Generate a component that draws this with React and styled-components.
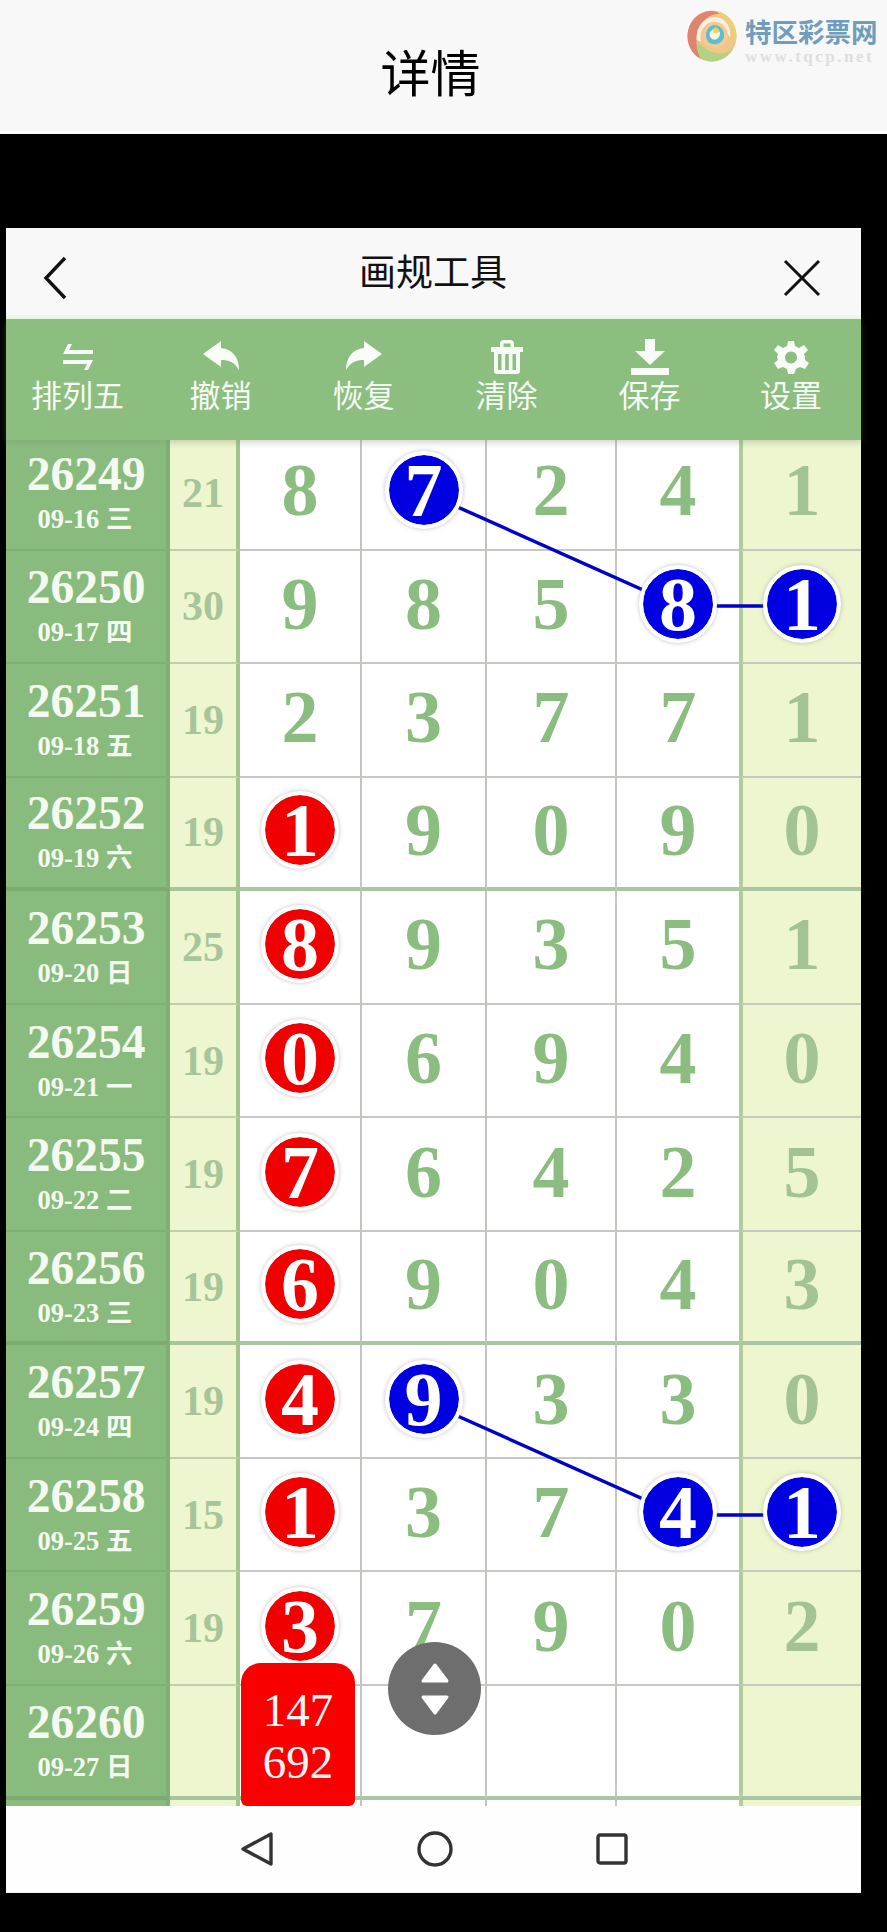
import React from 'react';
import styled, { createGlobalStyle } from 'styled-components';

const GlobalStyle = createGlobalStyle`
    html, body {
        margin: 0;
        padding: 0;
        background: #000;
    }
    * {
        box-sizing: border-box;
    }
`;

const Page = styled.div`
    width: 887px;
    height: 1932px;
    background: #000;
    overflow: hidden;
    font-family: "Noto Sans CJK SC", "Noto Sans", sans-serif;
`;

const TopBar = styled.header`
    height: 134px;
    background: #f8f8f8;
    border-bottom: 3px solid #fdfdfd;
    position: relative;
    display: flex;
    align-items: center;
    justify-content: center;
`;

const TopTitle = styled.h1`
    margin: 8px 26px 0 0;
    font-size: 50px;
    font-weight: 400;
    line-height: 1;
    color: #000;
`;

const Logo = styled.div`
    position: absolute;
    top: 9px;
    left: 686px;
    display: flex;
    gap: 7px;
`;

const LogoText = styled.div`
    display: flex;
    flex-direction: column;
    padding-top: 4px;
`;

const LogoName = styled.span`
    font-size: 26.5px;
    line-height: 36px;
    font-weight: 700;
    white-space: nowrap;
    color: #709dbd;
`;

const LogoUrl = styled.span`
    font-family: "Liberation Serif", serif;
    font-size: 17px;
    line-height: 16px;
    font-weight: 700;
    letter-spacing: 2.5px;
    color: #dedede;
    white-space: nowrap;
`;

const Panel = styled.main`
    margin: 94px 0 0 6px;
    width: 855px;
    height: 1664px;
    display: flex;
    flex-direction: column;
`;

const Heading = styled.div`
    height: 91px;
    flex: none;
    background: #f8f8f8;
    border-bottom: 4px solid #eff7e9;
    display: flex;
    align-items: center;
    justify-content: space-between;
    padding: 12px 40px 0 37px;
`;

const HeadingTitle = styled.h2`
    margin: 0 0 14px 16px;
    font-size: 37px;
    font-weight: 400;
    line-height: 1;
    color: #111;
`;

const Toolbar = styled.nav`
    height: 121px;
    flex: none;
    position: relative;
    z-index: 5;
    background: #8cbe80;
    box-shadow: 0 3px 6px rgba(120, 150, 110, 0.35);
    display: grid;
    grid-template-columns: repeat(5, 143px) 1fr;
    padding-top: 20px;
`;

const Tool = styled.div`
    display: flex;
    flex-direction: column;
    align-items: center;
    color: #f6fbf3;
`;

const ToolIcon = styled.svg`
    width: 40px;
    height: 36px;
    fill: #f8fcf6;
`;

const ToolLabel = styled.span`
    font-size: 31px;
    line-height: 34px;
    margin-top: 2px;
`;

const Table = styled.section`
    position: relative;
    flex: none;
    height: 1369px;
    margin-top: -3px;
    overflow: hidden;
`;

const Row = styled.div`
    display: grid;
    grid-template-columns: 164px 70px 122px 125px 130px 122px 122px;
    height: 113.55px;
`;

const DateCell = styled.div`
    background: #8abb7e;
    border-right: 4px solid #7fb074;
    border-bottom: ${(p) => (p.$thick ? '4px solid #7cab72' : '2px solid #7fb074')};
    display: flex;
    flex-direction: column;
    align-items: center;
    justify-content: center;
    color: #f4faf0;
    padding-bottom: 1px;
`;

const Issue = styled.div`
    font-family: "Liberation Serif", serif;
    font-size: 47.5px;
    font-weight: 700;
    line-height: 50px;
`;

const Day = styled.div`
    font-family: "Liberation Serif", "Noto Sans CJK SC", serif;
    font-size: 26.5px;
    font-weight: 700;
    line-height: 34px;
    margin: 3px 2px 0 0;
`;

const SumCell = styled.div`
    background: #eef6cf;
    border-right: 4px solid #a3c390;
    border-bottom: ${(p) => (p.$thick ? '4px solid #aac59a' : '2px solid #c0cfa8')};
    display: flex;
    align-items: center;
    justify-content: center;
    font-family: "Liberation Serif", serif;
    font-size: 42px;
    font-weight: 700;
    color: #a8c49a;
`;

const Cell = styled.div`
    background: ${(p) => (p.$last ? '#eef6cf' : '#fff')};
    border-right: ${(p) => (p.$last || p.$edge ? 'none' : '2px solid #c3c6bf')};
    border-left: ${(p) => (p.$last ? '4px solid #b2cc9c' : 'none')};
    border-bottom: ${(p) => (p.$thick ? '4px solid #aac5a2' : '2px solid #c6c9c2')};
    padding-bottom: 5px;
    display: flex;
    align-items: center;
    justify-content: center;
    font-family: "Liberation Serif", serif;
    font-size: 74px;
    font-weight: 700;
    line-height: 1;
    color: ${(p) => (p.$last ? '#a3c394' : '#8cbd80')};
`;

const Ball = styled.div`
    position: relative;
    z-index: 2;
    width: 78px;
    height: 78px;
    flex: none;
    border-radius: 50%;
    border: 4px solid #fff;
    box-shadow: 0 0 4px rgba(130, 130, 130, 0.5);
    background: ${(p) => (p.$red ? '#f00000' : '#0000e0')};
    background-clip: padding-box;
    color: #fff;
    font-size: 76px;
    display: flex;
    align-items: center;
    justify-content: center;
`;

const Links = styled.svg`
    position: absolute;
    top: 0;
    left: 0;
    z-index: 1;
    pointer-events: none;
`;

const CountTag = styled.div`
    position: absolute;
    z-index: 3;
    left: 235px;
    top: 1226px;
    width: 114px;
    height: 143px;
    background: #f80000;
    border-radius: 20px 20px 6px 6px;
    padding-top: 21px;
    color: #f8f4f4;
    font-family: "Liberation Serif", serif;
    font-size: 47px;
    line-height: 52px;
    text-align: center;
`;

const ScrollButton = styled.div`
    position: absolute;
    z-index: 4;
    left: 382px;
    top: 1205px;
    width: 93px;
    height: 93px;
    border-radius: 50%;
    background: #6e6e6e;
    display: flex;
    align-items: center;
    justify-content: center;
`;

const NavBar = styled.footer`
    flex: none;
    height: 87px;
    background: #fefefe;
    border-bottom: 1px solid #f2f2f2;
    position: relative;
    z-index: 6;
    display: flex;
    align-items: center;
    justify-content: center;
    gap: 143px;
`;

const Back = () => (
    <svg width="24" height="44" viewBox="0 0 24 44" fill="none" stroke="#111" strokeWidth="3.4">
        <path d="M22 2 L3 22 L22 42" />
    </svg>
);

const Close = () => (
    <svg width="38" height="38" viewBox="0 0 38 38" fill="none" stroke="#111" strokeWidth="3">
        <path d="M2 2 L36 36 M36 2 L2 36" />
    </svg>
);

const SwapIcon = () => (
    <ToolIcon viewBox="0 0 40 36">
        <path d="M10 5 h4 l-3 6 H35 v4 H5 Z" />
        <path d="M5 21 H35 l-5 10 h-4 l3 -6 H5 Z" />
    </ToolIcon>
);

const UndoIcon = () => (
    <ToolIcon viewBox="0 0 40 36">
        <path d="M2 15 L20 2 V9 C32 10 38 19 38 31 C33 23 28 21 20 21 V28 Z" />
    </ToolIcon>
);

const RedoIcon = () => (
    <ToolIcon viewBox="0 0 40 36">
        <path d="M38 15 L20 2 V9 C8 10 2 19 2 31 C7 23 12 21 20 21 V28 Z" />
    </ToolIcon>
);

const TrashIcon = () => (
    <ToolIcon viewBox="0 0 40 36">
        <path fillRule="evenodd" d="M13 8 V5 q0 -4 4 -4 H23 q4 0 4 4 V8 Z M16.5 8 H23.5 V4.5 H16.5 Z" />
        <path d="M4 8 H36 V13 H4 Z" />
        <path fillRule="evenodd" d="M7 13 H33 V32 q0 3 -3 3 H10 q-3 0 -3 -3 Z M11 15 v16 h3.5 V15 Z M18.2 15 v16 h3.6 V15 Z M25.5 15 v16 h3.5 V15 Z" />
    </ToolIcon>
);

const SaveIcon = () => (
    <ToolIcon viewBox="0 0 40 36">
        <path d="M15 0 H25 V12 H35 L20 26 L5 12 H15 Z" />
        <path d="M1 29 H39 V36 H1 Z" />
    </ToolIcon>
);

const GearIcon = () => (
    <ToolIcon viewBox="0 0 40 36">
        <path
            fillRule="evenodd"
            d="M17 2 H23 L24 7 L28 9 L33 6 L37 11 L33 15 L34 18 L34 21 L38 24 L34 30 L29 28 L25 30 L23 35 H17 L16 30 L12 28 L7 30 L3 24 L7 21 L6 18 L7 15 L3 11 L7 6 L12 9 L16 7 Z M20 12.5 a6 6 0 1 0 0.01 0 Z"
        />
    </ToolIcon>
);

const LogoMark = () => (
    <svg width="52" height="54" viewBox="0 0 52 54" fill="none">
        <ellipse cx="26" cy="27" rx="24.5" ry="25.5" fill="#efc788" />
        <path d="M24 2 C10 3 1.500 15 1.500 28 C1.500 38 8 47 15 50 C10 41 8 26 15 15 C20 8 28 4 36 5 C32 3 28 1.500 24 2 Z" fill="#dd8570" />
        <path d="M30 2 C42 4 50.500 14 50.500 27 C50.500 31 49.500 35 48 38 C49 26 43 12 30 2 Z" fill="#eccf74" />
        <path d="M15 50 C25 55 41 53 48 38 C42 45 32 46 24 42 C19 40 14 36 11 31 C11 38 12 45 15 50 Z" fill="#b4d285" />
        <path d="M11 31 C9 20 17 8 30 8 C40 9 46 19 44 29 C41 22 36 14 28 13 C19 13 13 22 15 33 Z" fill="#f7efdf" />
        <path d="M18 33 C24 42 37 40 41 31 C44 22 38 13 29 13 C21 13 15 23 18 33 Z" fill="#f5c99a" />
        <path d="M21 31 C25 38 36 36 38 28 C39 21 34 16 28 16 C22 17 18 23 21 31 Z" fill="#5dbfc9" />
        <path d="M25 29 C29 33 34 29 34 24 C33 20 29 19 26 21 C23 23 23 27 25 29 Z" fill="#f3f6ea" />
        <path d="M28 24 C30 25 33 24 33 21 C32 19 30 18 28 19 C27 21 27 23 28 24 Z" fill="#efd060" />
    </svg>
);

const UpDown = () => (
    <svg width="30" height="56" viewBox="0 0 30 56" fill="#fff" stroke="#fff" strokeWidth="3" strokeLinejoin="round">
        <path d="M15 4 L27 20 H3 Z" />
        <path d="M3 36 H27 L15 52 Z" />
    </svg>
);

const tools = [
    { label: '排列五', icon: <SwapIcon /> },
    { label: '撤销', icon: <UndoIcon /> },
    { label: '恢复', icon: <RedoIcon /> },
    { label: '清除', icon: <TrashIcon /> },
    { label: '保存', icon: <SaveIcon /> },
    { label: '设置', icon: <GearIcon /> },
];

// b = 蓝球, r = 红球; the ball sits on that column of the row
const rows = [
    { issue: 26249, day: '09-16 三', sum: 21, nums: [8, 7, 2, 4, 1], balls: { 1: 'b' } },
    { issue: 26250, day: '09-17 四', sum: 30, nums: [9, 8, 5, 8, 1], balls: { 3: 'b', 4: 'b' } },
    { issue: 26251, day: '09-18 五', sum: 19, nums: [2, 3, 7, 7, 1], balls: {} },
    { issue: 26252, day: '09-19 六', sum: 19, nums: [1, 9, 0, 9, 0], balls: { 0: 'r' }, thick: true },
    { issue: 26253, day: '09-20 日', sum: 25, nums: [8, 9, 3, 5, 1], balls: { 0: 'r' } },
    { issue: 26254, day: '09-21 一', sum: 19, nums: [0, 6, 9, 4, 0], balls: { 0: 'r' } },
    { issue: 26255, day: '09-22 二', sum: 19, nums: [7, 6, 4, 2, 5], balls: { 0: 'r' } },
    { issue: 26256, day: '09-23 三', sum: 19, nums: [6, 9, 0, 4, 3], balls: { 0: 'r' }, thick: true },
    { issue: 26257, day: '09-24 四', sum: 19, nums: [4, 9, 3, 3, 0], balls: { 0: 'r', 1: 'b' } },
    { issue: 26258, day: '09-25 五', sum: 15, nums: [1, 3, 7, 4, 1], balls: { 0: 'r', 3: 'b', 4: 'b' } },
    { issue: 26259, day: '09-26 六', sum: 19, nums: [3, 7, 9, 0, 2], balls: { 0: 'r' } },
    { issue: 26260, day: '09-27 日', sum: '', nums: ['', '', '', '', ''], balls: {}, thick: true },
];

export default function App() {
    return (
        <Page>
            <GlobalStyle />
            <TopBar>
                <TopTitle>详情</TopTitle>
                <Logo>
                    <LogoMark />
                    <LogoText>
                        <LogoName>特区彩票网</LogoName>
                        <LogoUrl>www.tqcp.net</LogoUrl>
                    </LogoText>
                </Logo>
            </TopBar>
            <Panel>
                <Heading>
                    <Back />
                    <HeadingTitle>画规工具</HeadingTitle>
                    <Close />
                </Heading>
                <Toolbar>
                    {tools.map((t) => (
                        <Tool key={t.label}>
                            {t.icon}
                            <ToolLabel>{t.label}</ToolLabel>
                        </Tool>
                    ))}
                </Toolbar>
                <Table>
                    <Links width="855" height="1369">
                        <g stroke="#0000c8" strokeWidth="3.5" fill="none">
                            <path d="M418 55 L673 169 H796" />
                            <path d="M418 964 L673 1078 H796" />
                        </g>
                    </Links>
                    {rows.map((r) => (
                        <Row key={r.issue}>
                            <DateCell $thick={r.thick}>
                                <Issue>{r.issue}</Issue>
                                <Day>{r.day}</Day>
                            </DateCell>
                            <SumCell $thick={r.thick}>{r.sum}</SumCell>
                            {r.nums.map((n, i) => (
                                <Cell key={i} $thick={r.thick} $last={i === 4} $edge={i === 3}>
                                    {r.balls[i] ? <Ball $red={r.balls[i] === 'r'}>{n}</Ball> : n}
                                </Cell>
                            ))}
                        </Row>
                    ))}
                    <Row>
                        <DateCell />
                        <SumCell />
                        {[0, 1, 2, 3, 4].map((i) => (
                            <Cell key={i} $last={i === 4} $edge={i === 3} />
                        ))}
                    </Row>
                    <CountTag>147<br />692</CountTag>
                    <ScrollButton>
                        <UpDown />
                    </ScrollButton>
                </Table>
                <NavBar>
                    <svg width="34" height="36" viewBox="0 0 34 36" fill="none" stroke="#333" strokeWidth="3.4" strokeLinejoin="round">
                        <path d="M31 3 V33 L3 18 Z" />
                    </svg>
                    <svg width="36" height="36" viewBox="0 0 36 36" fill="none" stroke="#333" strokeWidth="3.4">
                        <circle cx="18" cy="18" r="16" />
                    </svg>
                    <svg width="32" height="32" viewBox="0 0 32 32" fill="none" stroke="#333" strokeWidth="3.4" strokeLinejoin="round">
                        <rect x="2" y="2" width="28" height="28" rx="2" />
                    </svg>
                </NavBar>
            </Panel>
        </Page>
    );
}
